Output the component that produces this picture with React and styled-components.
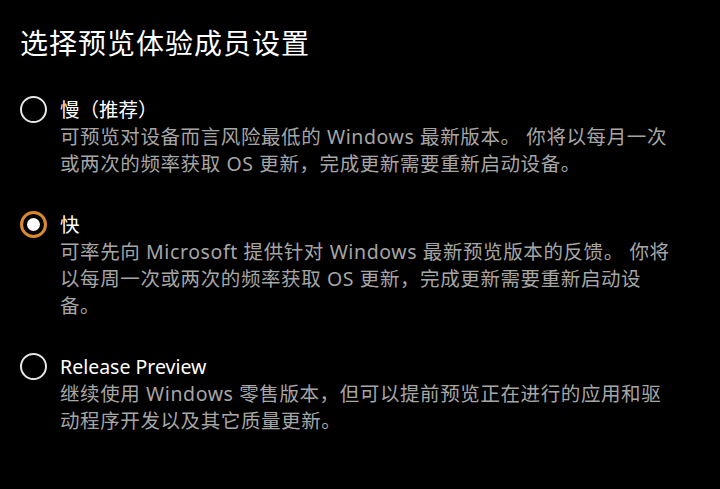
import React from "react";
import styled, { createGlobalStyle } from "styled-components";

const GlobalStyle = createGlobalStyle`
  html, body {
    margin: 0;
    padding: 0;
    background: #000;
  }
  body {
    font-family: "Noto Sans", "Noto Sans CJK SC", sans-serif;
    color: #fff;
  }
`;

const Page = styled.div`
  width: 720px;
  height: 489px;
  background: #000;
  padding: 22px 0 0 20px;
  box-sizing: border-box;
  overflow: hidden;
`;

const Title = styled.h1`
  margin: 0;
  font-family: "Noto Sans CJK SC", sans-serif;
  font-weight: 400;
  font-size: 28px;
  line-height: 40px;
  letter-spacing: 1px;
  color: #fff;
`;

const OptionList = styled.div`
  display: flex;
  flex-direction: column;
  gap: 34px;
  margin-top: 34px;
`;

const Option = styled.label`
  display: flex;
  align-items: flex-start;
  gap: 13px;
`;

const Radio = styled.span`
  flex: none;
  width: 27px;
  height: 27px;
  box-sizing: border-box;
  border-radius: 50%;
  border: ${(p) => (p.$checked ? "3px solid #d98a2b" : "2.5px solid #e6e6e6")};
  display: flex;
  align-items: center;
  justify-content: center;

  &::after {
    content: "";
    display: ${(p) => (p.$checked ? "block" : "none")};
    width: 13px;
    height: 13px;
    border-radius: 50%;
    background: #fff;
  }
`;

const Body = styled.div`
  display: flex;
  flex-direction: column;
`;

const Label = styled.div`
  font-size: 19.5px;
  line-height: 27px;
  color: #fff;
`;

const Desc = styled.p`
  margin: 0;
  font-size: 19.5px;
  line-height: 27px;
  letter-spacing: 0.6px;
  color: #a6a6a6;
`;

const options = [
  {
    label: "慢（推荐）",
    lines: [
      "可预览对设备而言风险最低的 Windows 最新版本。 你将以每月一次",
      "或两次的频率获取 OS 更新，完成更新需要重新启动设备。",
    ],
  },
  {
    label: "快",
    checked: true,
    lines: [
      "可率先向 Microsoft 提供针对 Windows 最新预览版本的反馈。 你将",
      "以每周一次或两次的频率获取 OS 更新，完成更新需要重新启动设",
      "备。",
    ],
  },
  {
    label: "Release Preview",
    lines: [
      "继续使用 Windows 零售版本，但可以提前预览正在进行的应用和驱",
      "动程序开发以及其它质量更新。",
    ],
  },
];

export default function App() {
  return (
    <>
      <GlobalStyle />
      <Page>
        <Title>选择预览体验成员设置</Title>
        <OptionList>
          {options.map((o) => (
            <Option key={o.label}>
              <Radio $checked={o.checked} />
              <Body>
                <Label>{o.label}</Label>
                <Desc>
                  {o.lines.map((l, i) => (
                    <React.Fragment key={i}>
                      {l}
                      {i < o.lines.length - 1 && <br />}
                    </React.Fragment>
                  ))}
                </Desc>
              </Body>
            </Option>
          ))}
        </OptionList>
      </Page>
    </>
  );
}
